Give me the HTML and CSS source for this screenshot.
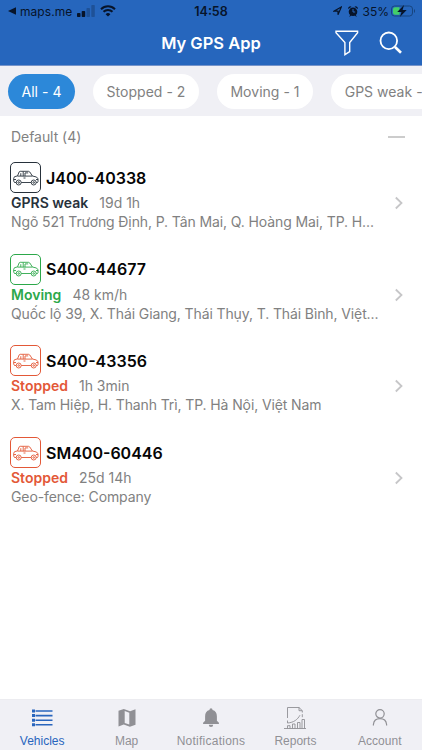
FILE: index.html
```
<!DOCTYPE html>
<html lang="en">
<head>
    <meta charset="UTF-8">
    <title>My GPS App</title>
    <meta name="viewport" content="width=device-width, initial-scale=1.0">
    <link rel="stylesheet" href="styles.css">
</head>
<body>

<!-- shared car outline, coloured by each vehicle's state -->
<svg class="defs" width="0" height="0">
    <symbol id="car" viewBox="0 0 26 16">
        <path d="M3.200 12.500H1.500L.7 11V8.300L1.500 6.700 4.500 5.900 6.200 1.800 7.200 1.300H15.500L16.800 2 19.400 6 23.500 7 25 8.800V11.500L24.500 12.500H23.200M8.200 12.500H18.200M4.500 6.100H19.400M7.800 3.200V6M10.200 1.500V6.200M12 3V6.200M12 2.900H15.200M10.500 8H12.500M.8 9.500H3M23 9.500H25"/>
        <circle cx="5.700" cy="12.500" r="2.500"/><circle cx="5.700" cy="12.500" r=".8"/>
        <circle cx="20.700" cy="12.500" r="2.500"/><circle cx="20.700" cy="12.500" r=".8"/>
    </symbol>
</svg>

<header class="header">
    <div class="status-bar">
        <div class="status-left">
            <svg width="8" height="8" viewBox="0 0 8 8"><path d="M0 4 8 .3v7.4z"/></svg>
            <span class="back-app">maps.me</span>
            <svg class="signal" width="18" height="12" viewBox="0 0 18 12"><rect x="0" y="8" width="3.5" height="4" rx=".8"/><rect x="4.7" y="6" width="3.5" height="6" rx=".8"/><g opacity=".25"><rect x="9.5" y="3" width="3.5" height="9" rx=".8"/><rect x="14.3" y="0" width="3.5" height="12" rx=".8"/></g></svg>
            <svg class="wifi" width="16" height="12" viewBox="0 0 16 12"><path d="m8 11.6 2.4-2.4a3.4 3.4 0 0 0-4.8 0z"/><path class="arc" d="M3.5 6.8a6.4 6.4 0 0 1 9 0M1 4.2a10 10 0 0 1 14 0"/></svg>
        </div>
        <span class="clock">14:58</span>
        <div class="status-right">
            <svg width="9" height="10" viewBox="0 0 9 10"><path class="arrow" d="M8.3 1 5 8.8V5.2H.8z"/></svg>
            <svg class="alarm" width="10" height="11" viewBox="0 0 10 11"><circle cx="5" cy="5.8" r="4.3"/><path d="M.3 3A2 2 0 0 1 3.5.8zM9.7 3A2 2 0 0 0 6.5.8zM1 10.8l1.5-2 1 1zM9 10.8l-1.5-2-1 1z"/><path class="hands" d="M5 3v3h2.2"/></svg>
            <span class="percent">35%</span>
            <svg class="battery" width="25" height="12" viewBox="0 0 25 12"><rect class="case" x=".5" y="1" width="21" height="10" rx="3"/><path class="case" d="M23.5 4.5v3"/><path class="level" d="M4 2.3h4.500v7.400H4A2 2 0 0 1 2 8V4a2 2 0 0 1 2-1.700z"/><path d="M13 0 6.200 7h4.300l-1.600 5L15.700 5h-4.100z"/></svg>
        </div>
    </div>
    <div class="nav">
        <h1>My GPS App</h1>
        <div class="actions">
            <svg width="24" height="26" viewBox="0 0 24 26"><path d="M1 1.300h21.600v1.500L14.700 12.500v9L9.900 24.600V12.500L1 2.800z"/></svg>
            <svg class="search" width="24" height="24" viewBox="0 0 24 24"><circle cx="9.800" cy="9.800" r="8.300"/><path class="handle" d="m16 16 6 5.800"/></svg>
        </div>
    </div>
</header>

<div class="filters">
    <span class="chip all active">All - 4</span>
    <span class="chip stopped-chip">Stopped - 2</span>
    <span class="chip moving-chip">Moving - 1</span>
    <span class="chip weak-chip">GPS weak - 1</span>
</div>

<main class="list">
    <div class="group"><span>Default (4)</span><i class="collapse"></i></div>

    <section class="vehicle weak">
        <div class="top"><span class="car"><svg><use href="#car"/></svg></span><h2>J400-40338</h2></div>
        <div class="state"><b>GPRS weak</b><span>19d 1h</span></div>
        <p>Ngõ 521 Trương Định, P. Tân Mai, Q. Hoàng Mai, TP. H...</p>
        <svg class="chevron" viewBox="0 0 10 14"><path d="m1.8 1.5 5.7 5.5-5.7 5.5"/></svg>
    </section>

    <section class="vehicle moving">
        <div class="top"><span class="car"><svg><use href="#car"/></svg></span><h2>S400-44677</h2></div>
        <div class="state"><b>Moving</b><span>48 km/h</span></div>
        <p>Quốc lộ 39, X. Thái Giang, Thái Thụy, T. Thái Bình, Việt...</p>
        <svg class="chevron" viewBox="0 0 10 14"><path d="m1.8 1.5 5.7 5.5-5.7 5.5"/></svg>
    </section>

    <section class="vehicle stopped">
        <div class="top"><span class="car"><svg><use href="#car"/></svg></span><h2>S400-43356</h2></div>
        <div class="state"><b>Stopped</b><span>1h 3min</span></div>
        <p>X. Tam Hiệp, H. Thanh Trì, TP. Hà Nội, Việt Nam</p>
        <svg class="chevron" viewBox="0 0 10 14"><path d="m1.8 1.5 5.7 5.5-5.7 5.5"/></svg>
    </section>

    <section class="vehicle stopped">
        <div class="top"><span class="car"><svg><use href="#car"/></svg></span><h2>SM400-60446</h2></div>
        <div class="state"><b>Stopped</b><span>25d 14h</span></div>
        <p>Geo-fence: Company</p>
        <svg class="chevron" viewBox="0 0 10 14"><path d="m1.8 1.5 5.7 5.5-5.7 5.5"/></svg>
    </section>
</main>

<nav class="tabs">
    <div class="tab selected">
        <svg viewBox="0 0 24 24"><path class="fill" d="M2 3.500h3v3H2zM2 8.100h3v3H2zM2 12.700h3v3H2zM2 17.300h3v3H2zM5.500 4.200h17v1.600h-17zM5.500 8.800h17v1.600h-17zM5.500 13.400h17v1.600h-17zM5.500 18h17v1.600h-17z"/></svg>
        <span>Vehicles</span>
    </div>
    <div class="tab">
        <svg viewBox="0 0 24 24"><path class="fill" fill-rule="evenodd" d="m3.5 4.8 5.3-1.9 6.3 2.3 5.4-2v15.5l-5.6 2-6.2-2.1-5.200 2zM9.700 5v12l4.600 1.600V6.700z"/></svg>
        <span>Map</span>
    </div>
    <div class="tab">
        <svg viewBox="0 0 24 24"><path class="fill" d="M10.5 4V3.700a1.500 1.500 0 0 1 3 0V4c3 .8 4.400 3.100 4.400 6.300v4.500l2 2v1.100H4.100v-1.100l2-2v-4.500C6.100 7.100 7.500 4.800 10.500 4zM9.800 18.800h4.400a2.200 2.200 0 0 1-4.400 0z"/></svg>
        <span class="long">Notifications</span>
    </div>
    <div class="tab">
        <svg class="report" viewBox="0 0 24 24"><path d="M4.500 12V1.500H16l3.300 3.200v1.800M16 1.500v3.200h3.300M19.300 8.200v3M4.500 14.500V17C11 16.500 14.500 13.500 17 9.200M1 22.500h22M4.500 22.500v-2.800h2.500v2.800M9.500 22.500v-4.500h2.500v4.500M14.500 22.500V16.500h2.500v6M19 22.500V13.500h2.500v9"/></svg>
        <span>Reports</span>
    </div>
    <div class="tab">
        <svg viewBox="0 0 24 24"><circle cx="12" cy="7.800" r="4.200"/><path d="M5.400 19.500v-1c.4-3.800 3-5.800 6.600-5.800s6.200 2 6.600 5.800v1"/></svg>
        <span>Account</span>
    </div>
</nav>

</body>
</html>
```
FILE: styles.css
```
* { box-sizing: border-box; }
body { margin: 0; height: 750px; display: flex; flex-direction: column; overflow: hidden; background: #fff; color: #818181; font-family: Inter, sans-serif; font-size: 14px; }
h1, h2, p { margin: 0; white-space: nowrap; }
svg { display: block; flex: none; }
.defs { position: absolute; }

/* header */
.header { height: 66px; flex: none; background: #2666bd; border-bottom: 1px solid #7694ca; }
.status-bar { height: 22px; display: grid; grid-template-columns: 1fr auto 1fr; align-items: center; padding: 0 6px 0 8px; color: #07142a; fill: #07142a; }
.status-left, .status-right { display: flex; align-items: center; }
.status-right { justify-content: flex-end; }
.back-app { margin: 0 5px 0 4px; font-size: 12px; letter-spacing: .05px; }
.wifi { margin-left: 5px; }
.arc { fill: none; stroke: #07142a; stroke-width: 2; }
.clock { margin-right: 2px; font-size: 12.5px; font-weight: 600; }
.arrow { fill: none; stroke: #07142a; stroke-width: 1.2; }
.alarm { margin: 0 5px 0 6px; }
.hands { fill: none; stroke: #2666bd; }
.percent { font-size: 12px; margin-right: 2px; }
.case { fill: none; stroke: #17457f; }
.level { fill: #43cf68; }
.nav { height: 42px; display: grid; grid-template-columns: 1fr auto 1fr; align-items: center; padding-right: 19px; }
.nav h1 { grid-column: 2; margin-left: 19px; color: #fff; font-size: 16.5px; font-weight: 600; }
.actions { display: flex; justify-content: flex-end; align-items: center; gap: 20px; fill: none; stroke: #fff; stroke-width: 1.4; }
.search { stroke-width: 1.8; }
.handle { stroke-width: 2.6; }

/* filters */
.filters { height: 50px; flex: none; display: flex; align-items: center; gap: 18px; padding-left: 8px; overflow: hidden; background: #f0f0f5; }
.chip { height: 35px; flex: none; display: flex; align-items: center; justify-content: center; border-radius: 18px; background: #fff; letter-spacing: .02px; white-space: nowrap; }
.active { background: #2c88d9; color: #fff; }
.all { width: 67px; }
.stopped-chip { width: 106px; }
.moving-chip { width: 96px; }
.weak-chip { width: 115px; }

/* vehicles */
.list { flex: 1; }
.group { height: 42px; display: flex; align-items: center; justify-content: space-between; padding: 0 17px 1px 11px; letter-spacing: -.05px; }
.collapse { width: 17px; height: 2px; background: #ccc; }
.vehicle { height: 91.7px; position: relative; padding: 4px 40px 0 10px; }
.top { display: flex; align-items: center; gap: 5px; }
.car { width: 31px; height: 31px; display: flex; align-items: center; justify-content: center; border: 1px solid; border-radius: 5px; }
.car svg { width: 26px; height: 16px; fill: none; stroke: currentColor; stroke-width: .9; }
.vehicle h2 { color: #050505; font-size: 16px; font-weight: 600; }
.state { display: flex; gap: 11px; height: 19px; line-height: 19px; padding-left: 1px; }
.state b { font-weight: 600; }
.vehicle p { padding-left: 1px; line-height: 19px; letter-spacing: -.11px; }
.weak .car, .weak b { color: #27313b; }
.moving .car, .moving b { color: #2ca84a; }
.stopped .car, .stopped b { color: #e35837; }
.chevron { position: absolute; right: 18px; top: 38px; width: 10px; height: 14px; fill: none; stroke: #c6c6c8; stroke-width: 1.8; }

/* bottom tabs */
.tabs { height: 51px; flex: none; display: grid; grid-template-columns: repeat(5, 1fr); background: #f0f0f5; border-top: 1px solid #ececf0; }
.tab { display: flex; flex-direction: column; align-items: center; padding-top: 6px; color: #909095; font-family: "Liberation Sans", Arial, sans-serif; font-size: 12px; }
.tab svg { width: 24px; height: 24px; fill: none; stroke: currentColor; stroke-width: 1.2; }
.tab .fill { fill: currentColor; stroke: none; }
.tab .report { stroke-width: .9; }
.tab span { margin-top: 5px; line-height: 13px; }
.tab .long { letter-spacing: .25px; }
.selected { color: #2865bd; }
```
